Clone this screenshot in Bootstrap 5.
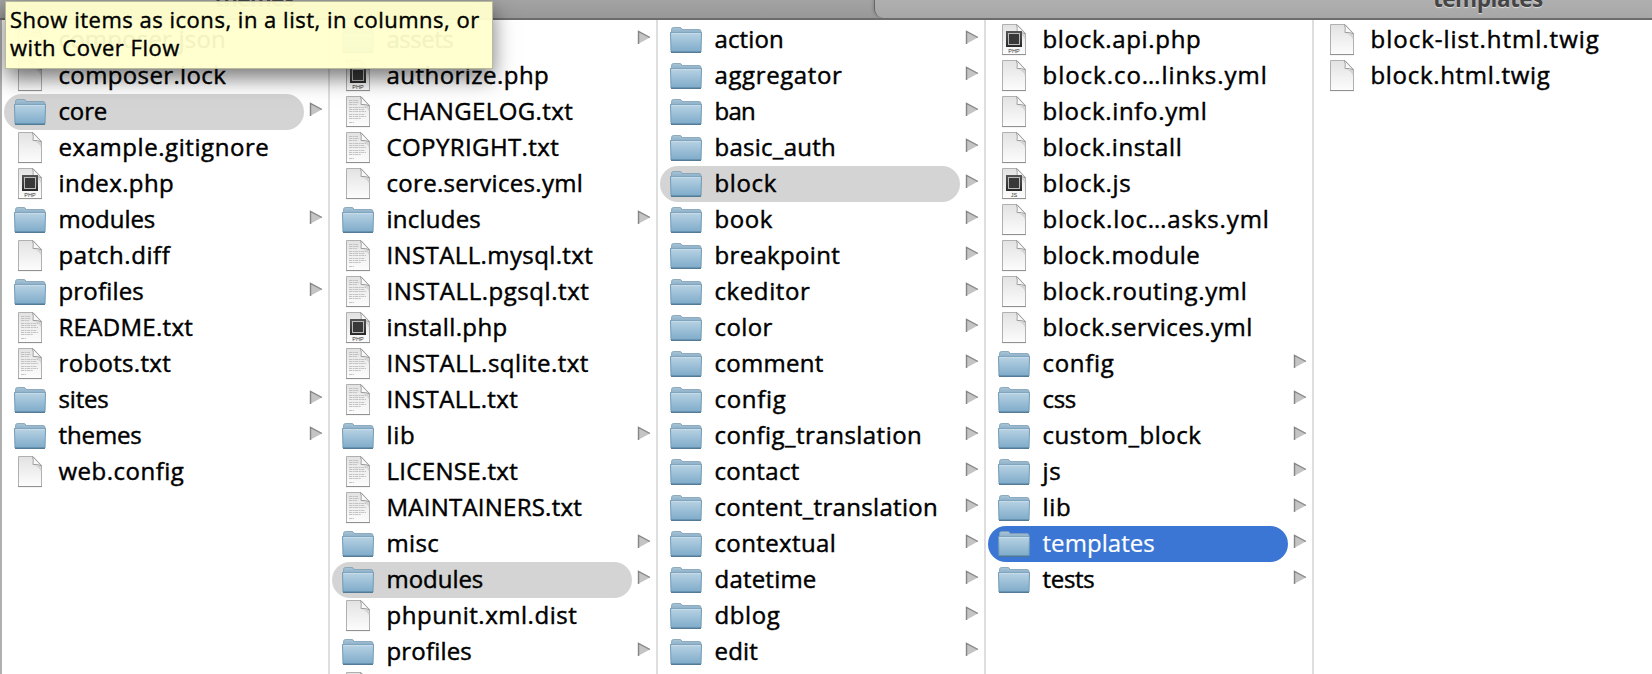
<!DOCTYPE html>
<html lang="en">
<head>
<meta charset="utf-8">
<title>templates</title>
<link href="https://cdn.jsdelivr.net/npm/bootstrap@5.3.0/dist/css/bootstrap.min.css" rel="stylesheet">
<style>
body{font-family:"Open Sans","Noto Sans",sans-serif;font-size:24px;line-height:36px;color:#000;background:#fff;height:674px}
.tabstrip{height:20px;background:linear-gradient(#a3a3a3,#989898);border-bottom:2px solid #6c6c6c}
.tabstrip .tab-a{width:874px;padding-right:366px}
.tabstrip .tab-b{padding-left:558px;background:linear-gradient(#afafaf,#a7a7a7);border-left:1px solid #666;border-bottom-left-radius:9px;box-shadow:-1px 0 3px #7779}
.tabstrip .tab-title{font-weight:700;font-size:22.5px;line-height:30px;margin-top:-16px;color:#444;text-shadow:0 1px 1px #ddd;white-space:nowrap}
.browser{height:654px;border-left:2px solid #b0b0b0}
.pane{width:328px;border-right:2px solid #dedede;padding:2px 0 0 2px}
.pane:last-child{border-right:0}
.entry{height:36px}
.entry-main{width:300px;height:36px;border-radius:18px;padding-left:8px}
.entry-main svg{width:36px;height:36px}
.entry-main span{margin-left:10.5px;-webkit-text-stroke:.45px currentColor;margin-top:-1px}
.picked .entry-main{background:#d4d4d4}
.active-pick .entry-main{background:#3c76d4;color:#fff}
.active-pick .entry-main span{-webkit-text-stroke-width:.2px}
.arrow{width:14px;height:36px;margin-left:5px}
.hint{left:5px;top:1px;width:488px;height:68px;background:#ffffccf2;border:1px solid #b9b99b;box-shadow:0 9px 20px #0008;font-size:22px;line-height:28px;padding:3px 0 0 4px;z-index:5}
.hint span{-webkit-text-stroke:.4px #000}
</style>
</head>
<body class="overflow-hidden position-relative">
<svg width="0" height="0" class="position-absolute" aria-hidden="true">
 <defs>
  <linearGradient id="gf" x2="0" y2="1"><stop offset="0" stop-color="#b9d3e4"/><stop offset="1" stop-color="#7eabca"/></linearGradient>
  <linearGradient id="gt" x2="0" y2="1"><stop offset="0" stop-color="#a9c5d7"/><stop offset="1" stop-color="#86aac4"/></linearGradient>
  <linearGradient id="gp" x2="0" y2="1"><stop offset="0" stop-color="#e2e2e2"/><stop offset="1" stop-color="#fdfdfd"/></linearGradient>
  <linearGradient id="gk" x2="0" y2="1"><stop offset="0" stop-color="#555"/><stop offset="1" stop-color="#292929"/></linearGradient>
  <symbol id="folder" viewBox="0 0 36 36">
   <path d="M3.5 10V7.5Q3.5 5.5 5.5 5.5H12Q13.5 5.5 14 7.5H31Q33 7.5 33 9.5V12H3z" fill="url(#gt)" stroke="#7c9eb5" stroke-width=".8"/>
   <path d="M2.5 10.5H33.5L33 30H3z" fill="url(#gf)" stroke="#719bb7"/>
   <path d="M3 30.3H33" stroke="#4f7894" stroke-width="1.3"/><path d="M3.5 11.3H32.5" stroke="#cfe0eb" stroke-width=".8"/>
  </symbol>
  <symbol id="page" viewBox="0 0 36 36">
   <path d="M6.5 2.5H21L29.5 11.5V32.5H6.5z" fill="url(#gp)" stroke="#b0b0b0"/>
   <path d="M6 32.6H30" stroke="#8e8e8e"/><path d="M21.5 11L29.5 12V19Q28 13 21.5 11" fill="#bbb" opacity=".5"/>
   <path d="M20.5 2.5Q21.8 6 21 10.5Q25.5 9.8 29.5 11.8z" fill="#fafafa" stroke="#999" stroke-width=".9"/>
  </symbol>
  <symbol id="text" viewBox="0 0 36 36"><use href="#page"/>
   <path d="M9 6.5h9M9 8.5h10M9 10.5h8M9 13.5h17M9 15.5h16M9 17.5h17M9 20.5h16M9 22.5h17M9 24.5h12M9 28.5h5" stroke="#bdbdbd" stroke-width=".9" stroke-dasharray="3 .6 2 .5"/>
  </symbol>
  <symbol id="code" viewBox="0 0 36 36"><use href="#page"/>
   <rect x="10" y="9" width="16" height="16" fill="url(#gk)"/><rect x="12.5" y="11.5" width="11" height="11" fill="#383838" stroke="#bbb"/>
  </symbol>
  <symbol id="tri" viewBox="0 0 14 36">
   <path d="M1 9.3V22L13 15.4z" fill="#c4c4c4"/><path d="M1.5 22V9.5L13 15.5" fill="none" stroke="#868686" stroke-width="1.4"/>
  </symbol>
 </defs>
</svg>

<div class="tabstrip d-flex overflow-hidden">
 <div class="tab-a d-flex justify-content-center flex-shrink-0"><div class="tab-title"><span data-width="80">themes</span></div></div>
 <div class="tab-b flex-grow-1 d-flex"><div class="tab-title"><span data-width="110">templates</span></div></div>
</div>
<main class="browser d-flex overflow-hidden" id="browser"></main>
<div class="hint position-absolute text-nowrap"><span data-width="469">Show items as icons, in a list, in columns, or</span><br><span data-width="169">with Cover Flow</span></div>

<script src="https://cdn.jsdelivr.net/npm/bootstrap@5.3.0/dist/js/bootstrap.bundle.min.js"></script>
<script>
// kind|name|label width|state; d = folder, p = plain page, t = text page, php/js = source file
const panes = [
 "p|composer.json|167,p|composer.lock|167,d|core|48.5|picked,p|example.gitignore|210,php|index.php|115,d|modules|96.5,p|patch.diff|111,d|profiles|85,t|README.txt|134,t|robots.txt|112,d|sites|50,d|themes|83,p|web.config|125",
 "d|assets|67,php|authorize.php|162,t|CHANGELOG.txt|186,t|COPYRIGHT.txt|172,p|core.services.yml|196,d|includes|94,t|INSTALL.mysql.txt|206,t|INSTALL.pgsql.txt|202,php|install.php|120.5,t|INSTALL.sqlite.txt|201.5,t|INSTALL.txt|131,d|lib|28,t|LICENSE.txt|131,t|MAINTAINERS.txt|195,d|misc|52,d|modules|96.5|picked,p|phpunit.xml.dist|190,d|profiles|85,t||0",
 "d|action|69,d|aggregator|127,d|ban|41,d|basic_auth|121,d|block|61.5|picked,d|book|57.5,d|breakpoint|125,d|ckeditor|95,d|color|57.5,d|comment|108.5,d|config|71,d|config_translation|207,d|contact|84.5,d|content_translation|223,d|contextual|121,d|datetime|101.5,d|dblog|65,d|edit|43",
 "php|block.api.php|158,p|block.co…links.yml|224,p|block.info.yml|164,p|block.install|139,js|block.js|88,p|block.loc…asks.yml|226,p|block.module|157,p|block.routing.yml|204,p|block.services.yml|209.5,d|config|71,d|css|33.5,d|custom_block|158,d|js|18,d|lib|28,d|templates|112|active-pick,d|tests|52",
 "p|block-list.html.twig|228,p|block.html.twig|179"
];
const icons = {d:'folder', p:'page', t:'text', php:'code', js:'code'};
document.getElementById('browser').innerHTML = panes.map(list =>
 `<section class="pane flex-shrink-0">${list.split(',').map(row => {
  const [kind, name, width, state = ''] = row.split('|');
  const tag = icons[kind] === 'code' ? `<text x="18" y="30.5" font-family="Liberation Sans" font-size="5.5" text-anchor="middle" fill="#333">${kind.toUpperCase()}</text>` : '';
  return `<div class="entry d-flex ${state}"><div class="entry-main d-flex text-nowrap"><svg class="flex-shrink-0"><use href="#${icons[kind]}"/>${tag}</svg><span data-width="${width}">${name}</span></div>${kind === 'd' ? '<svg class="arrow"><use href="#tri"/></svg>' : ''}</div>`;
 }).join('')}</section>`).join('');
document.querySelectorAll('[data-width]').forEach(el => {
 const n = el.textContent.length;
 if (!n) return;
 const natural = el.getBoundingClientRect().width - .3;
 el.style.letterSpacing = ((el.dataset.width - natural) / Math.max(n - 1, 1)).toFixed(3) + 'px';
});
</script>
</body>
</html>
